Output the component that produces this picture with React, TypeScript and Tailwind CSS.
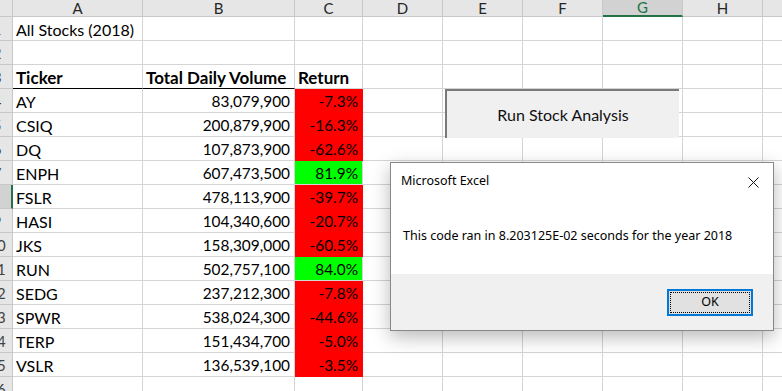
import React from 'react';

type Row = { ticker: string; volume: string; ret: string; up: boolean };

const stocks: Row[] = [
  { ticker: 'AY', volume: '83,079,900', ret: '-7.3%', up: false },
  { ticker: 'CSIQ', volume: '200,879,900', ret: '-16.3%', up: false },
  { ticker: 'DQ', volume: '107,873,900', ret: '-62.6%', up: false },
  { ticker: 'ENPH', volume: '607,473,500', ret: '81.9%', up: true },
  { ticker: 'FSLR', volume: '478,113,900', ret: '-39.7%', up: false },
  { ticker: 'HASI', volume: '104,340,600', ret: '-20.7%', up: false },
  { ticker: 'JKS', volume: '158,309,000', ret: '-60.5%', up: false },
  { ticker: 'RUN', volume: '502,757,100', ret: '84.0%', up: true },
  { ticker: 'SEDG', volume: '237,212,300', ret: '-7.8%', up: false },
  { ticker: 'SPWR', volume: '538,024,300', ret: '-44.6%', up: false },
  { ticker: 'TERP', volume: '151,434,700', ret: '-5.0%', up: false },
  { ticker: 'VSLR', volume: '136,539,100', ret: '-3.5%', up: false },
];

const cols = ['A', 'B', 'C', 'D', 'E', 'F', 'G', 'H', ''];
const colW = ['w-[130px]', 'w-[152px]', 'w-[68px]', 'w-[80px]', 'w-[80px]', 'w-[80px]', 'w-[80px]', 'w-[80px]', 'w-[40px]'];

const cell = 'h-[24px] shrink-0 border-r border-b border-[#d4d4d4] flex items-center pt-[3px] px-[3px] overflow-hidden whitespace-nowrap';

const RowHead: React.FC<{ n: number }> = ({ n }) => (
  <div
    className={`h-[24px] w-[13px] shrink-0 overflow-hidden border-b border-[#c8c8c8] relative ${
      n === 8 ? 'bg-[#d2d2d2] border-r-2 border-r-[#217346]' : 'bg-[#e6e6e6] border-r border-r-[#c8c8c8]'
    }`}
  >
    <div className="absolute right-0 top-0 h-full w-[30px] flex items-center justify-center pt-[2px] text-[15px] text-[#444]">
      {n}
    </div>
  </div>
);

const EmptyCells: React.FC<{ from: number }> = ({ from }) => (
  <>
    {colW.slice(from).map((w, i) => (
      <div key={i} className={`${cell} ${w}`} />
    ))}
  </>
);

export default function App() {
  return (
    <div className="relative w-[782px] h-[391px] overflow-hidden bg-white text-black font-['Lato',_'Liberation_Sans',_sans-serif]">
      {/* column headers */}
      <div className="flex h-[17px]">
        <div className="w-[13px] shrink-0 bg-[#e6e6e6] border-r border-b border-[#c8c8c8]" />
        {cols.map((c, i) => (
          <div
            key={i}
            className={`${colW[i]} shrink-0 flex items-center justify-center text-[15px] border-r border-[#c8c8c8] ${
              c === 'G'
                ? 'bg-[#d2d2d2] border-b-2 border-b-[#217346] text-[#217346]'
                : 'bg-[#e6e6e6] border-b border-b-[#c8c8c8] text-[#262626]'
            }`}
          >
            {c}
          </div>
        ))}
      </div>

      {/* row 1 */}
      <div className="flex text-[16px]">
        <RowHead n={1} />
        <div className={`${cell} w-[130px]`}>All Stocks (2018)</div>
        <EmptyCells from={1} />
      </div>
      {/* row 2 */}
      <div className="flex">
        <RowHead n={2} />
        <EmptyCells from={0} />
      </div>
      {/* row 3 headers */}
      <div className="flex text-[17px] font-bold">
        <RowHead n={3} />
        <div className={`${cell} w-[130px] border-b-black`}>Ticker</div>
        <div className={`${cell} w-[152px] border-b-black`}>Total Daily Volume</div>
        <div className={`${cell} w-[68px]`}>Return</div>
        <EmptyCells from={3} />
      </div>

      {stocks.map((s, i) => (
        <div key={s.ticker} className="flex">
          <RowHead n={i + 4} />
          <div className={`${cell} w-[130px] text-[16px]`}>{s.ticker}</div>
          <div className={`${cell} w-[152px] justify-end pr-[4px] text-[15.4px]`}>{s.volume}</div>
          <div
            className={`${cell} w-[68px] justify-end pr-[4px] text-[15.4px] ${
              s.up ? 'bg-[#00ff00] border-[#00ff00]' : 'bg-[#ff0000] border-[#ff0000]'
            }`}
          >
            {s.ret}
          </div>
          <EmptyCells from={3} />
        </div>
      ))}

      <div className="flex">
        <RowHead n={16} />
        <EmptyCells from={0} />
      </div>

      {/* form button */}
      <div className="absolute left-[445px] top-[89px] w-[234px] h-[49px] bg-[#f0f0f0] border-t-2 border-l-2 border-[#7a7a7a] flex items-center justify-center text-[16px] text-[#111]">
        Run Stock Analysis
      </div>

      {/* message box */}
      <div className="absolute left-[390px] top-[162px] w-[384px] h-[169px] bg-white border border-[#888] shadow-[0_6px_18px_rgba(0,0,0,0.28)] flex flex-col font-['Noto_Sans',_'Open_Sans',_sans-serif] text-[12.5px] text-black">
        <div className="flex items-center justify-between h-[37px] pl-[10px] pr-[14px]">
          <span>Microsoft Excel</span>
          <svg width="11" height="11" viewBox="0 0 11 11" className="mt-[1px]">
            <path d="M0.5 0.5 L10.5 10.5 M10.5 0.5 L0.5 10.5" stroke="#111" strokeWidth="1" fill="none" />
          </svg>
        </div>
        <div className="flex-1 flex items-center pl-[12px] pb-[1px]">
          This code ran in 8.203125E-02 seconds for the year 2018
        </div>
        <div className="h-[56px] bg-[#f0f0f0] flex items-center justify-end pr-[20px]">
          <div className="w-[86px] h-[27px] border-2 border-[#0078d7] bg-[#e1e1e1] p-[1px]">
            <div className="w-full h-full border border-dotted border-black flex items-center justify-center">
              OK
            </div>
          </div>
        </div>
      </div>
    </div>
  );
}
